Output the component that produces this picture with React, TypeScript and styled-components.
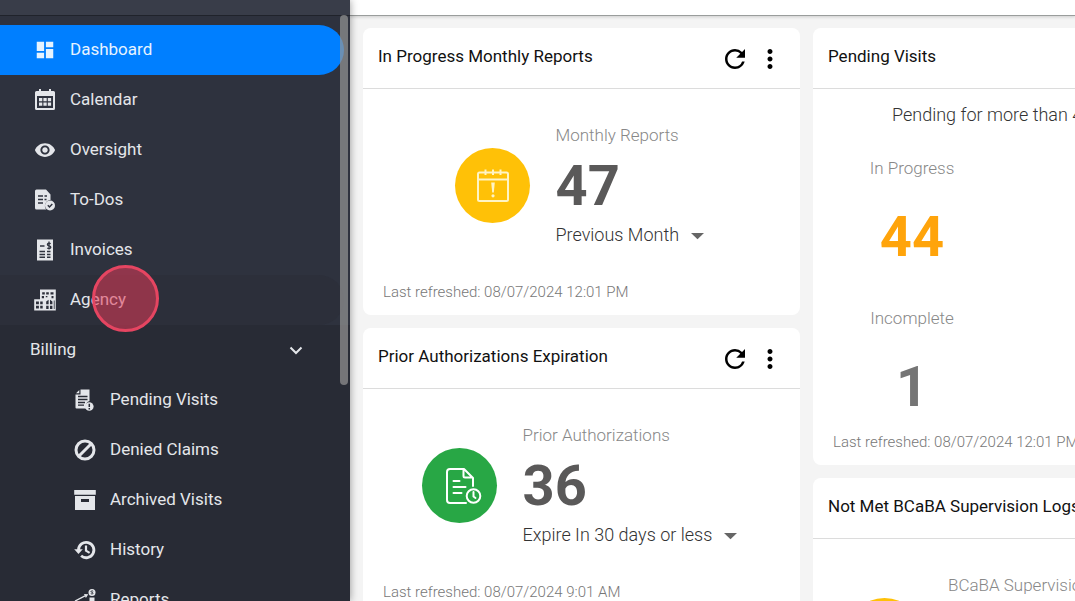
import React from 'react';
import styled, { createGlobalStyle } from 'styled-components';
import { MdDashboard, MdMoreVert, MdRefresh, MdRemoveRedEye } from 'react-icons/md';

const GlobalStyle = createGlobalStyle`
  *, *::before, *::after { box-sizing: border-box; }
  body { margin: 0; overflow: hidden; background: #f4f4f4; font-family: Roboto, sans-serif; }
  h2, p { margin: 0; }
`;

const Shell = styled.div`
  display: flex;
  height: 100vh;
  overflow: hidden;
`;

const Sidebar = styled.aside`
  position: relative;
  z-index: 2;
  flex: 0 0 350px;
  display: flex;
  flex-direction: column;
  overflow: hidden;
  background: #2e323e;
  color: #e4e6ea;
`;

const SidebarFrame = styled.div`
  position: relative;
  z-index: 2;
  display: flex;
  box-shadow: 0 0 8px rgba(0, 0, 0, 0.4);
`;

const Brand = styled.div`
  flex: 0 0 16px;
  background: #393d49;
  border-bottom: 1px solid #20232b;
`;

const NavList = styled.ul`
  margin: 0;
  padding: 9px 6px 0 0;
  list-style: none;
`;

const SubNav = styled.div`
  flex: 1 0 auto;
  background: #282b35;
`;

const SubList = styled.ul`
  margin: 0;
  padding: 0;
  list-style: none;
`;

const NavLink = styled.a<{ $active?: boolean; $hover?: boolean; $nested?: boolean }>`
  display: flex;
  align-items: center;
  gap: 10px;
  height: 50px;
  padding-left: ${(p) => (p.$nested ? 70 : 30)}px;
  border-radius: 0 25px 25px 0;
  background: ${(p) => (p.$active ? '#007fff' : p.$hover ? '#2c2f3a' : 'transparent')};
  color: ${(p) => (p.$active ? '#e6f3ff' : 'inherit')};
  text-decoration: none;
`;

const IconSlot = styled.span`
  display: flex;
  flex: 0 0 30px;
  justify-content: center;
`;

const NavText = styled.span`
  padding-bottom: 2px;
  font-size: 17px;
  line-height: 22px;
`;

const GroupToggle = styled.button`
  display: flex;
  align-items: center;
  justify-content: space-between;
  width: 100%;
  height: 50px;
  padding: 0 46px 0 30px;
  border: 0;
  background: none;
  color: inherit;
  font-family: inherit;
`;

const ScrollThumb = styled.div`
  position: absolute;
  top: 15px;
  right: 2px;
  width: 8px;
  height: 370px;
  border-radius: 4px;
  background: rgba(150, 150, 150, 0.7);
`;

const ClickMarker = styled.div`
  position: absolute;
  top: 265px;
  left: 92px;
  width: 67px;
  height: 67px;
  border: 3px solid #e54561;
  border-radius: 50%;
  background: rgba(226, 58, 88, 0.55);
`;

const Content = styled.div`
  flex: 1 1 0;
  min-width: 0;
  display: flex;
  flex-direction: column;
  overflow: hidden;
`;

const TopBar = styled.header`
  flex: 0 0 16px;
  background: #fff;
  border-bottom: 1px solid #9a9d9c;
  box-shadow: 0 1px 3px rgba(0, 0, 0, 0.16);
`;

const Board = styled.main`
  display: grid;
  grid-template-columns: repeat(2, minmax(437px, 1fr));
  align-items: start;
  gap: 13px;
  padding: 12px 13px;
`;

const Column = styled.div`
  display: flex;
  flex-direction: column;
  gap: 13px;
`;

const Card = styled.section`
  border-radius: 8px;
  background: #fff;
`;

const CardHeader = styled.div`
  display: flex;
  align-items: center;
  gap: 5px;
  height: 61px;
  padding: 2px 15px 0;
  border-bottom: 1px solid #dcdcdc;
`;

const CardTitle = styled.h2`
  flex: 1;
  padding-bottom: 6px;
  color: #111;
  font-size: 17px;
  font-weight: 400;
  line-height: 24px;
  white-space: nowrap;
`;

const IconButton = styled.button`
  display: flex;
  width: 30px;
  height: 30px;
  padding: 0;
  border: 0;
  background: none;
  color: #000;
`;

const Metric = styled.div`
  display: flex;
  align-items: center;
  justify-content: center;
  gap: 26px;
  padding: 35px 0 33px;
`;

const Badge = styled.div<{ $color: string }>`
  display: flex;
  flex: 0 0 75px;
  align-items: center;
  justify-content: center;
  height: 75px;
  border-radius: 50%;
  background: ${(p) => p.$color};
`;

const Label = styled.p`
  padding-bottom: 2px;
  color: #888;
  font-size: 17px;
  font-weight: 300;
  line-height: 22px;
  white-space: nowrap;
`;

const Figure = styled.p<{ $color?: string }>`
  color: ${(p) => p.$color || '#5a5959'};
  font-size: 56px;
  font-weight: 700;
  line-height: 76px;
`;

const Picker = styled.label`
  display: flex;
  align-items: center;
  gap: 11px;
  padding-right: 5px;
`;

const Select = styled.select`
  appearance: none;
  height: 23px;
  padding: 0 0 2px;
  border: 0;
  background: none;
  color: #333;
  font: 300 18px/21px Roboto, sans-serif;
`;

const Refreshed = styled.p`
  padding: 0 20px 11px;
  color: #777;
  font-size: 15px;
  font-weight: 300;
  line-height: 24px;
  white-space: nowrap;
`;

const PendingBody = styled.div`
  display: flex;
  flex-direction: column;
  align-items: center;
  padding: 15px 0 5px;
`;

const Tallies = styled.div`
  align-self: stretch;
  display: grid;
  grid-template-columns: 198px;
  gap: 32px;
  padding-top: 30px;
`;

const Tally = styled.div`
  display: flex;
  flex-direction: column;
  align-items: center;
  gap: 18px;
`;

const Svg = ({ size = 24, children }: { size?: number; children: React.ReactNode }) => (
  <svg width={size} height={size} viewBox={`0 0 ${size} ${size}`} fill="none" aria-hidden="true">
    {children}
  </svg>
);

const CalendarIcon = () => (
  <Svg>
    <path fill="currentColor" fillRule="evenodd" d="M6 1h2v2h8V1h2v2h2.500a1.500 1.500 0 0 1 1.500 1.500v16a1.500 1.500 0 0 1-1.500 1.500h-17A1.500 1.500 0 0 1 2 20.500v-16A1.500 1.500 0 0 1 3.500 3H6zM4 8v12h16V8z" />
    <path fill="currentColor" d="M6 10h3.300v3.300H6zM10.400 10h3.300v3.300h-3.300zM14.800 10h3.300v3.300h-3.300zM6 14.500h3.300v3.300H6zM10.400 14.500h3.300v3.300h-3.300zM14.800 14.500h3.300v3.300h-3.300z" />
  </Svg>
);

const TodoIcon = () => (
  <Svg>
    <path fill="currentColor" d="M3.500 1.500H13l4.500 5v5.500a5.800 5.800 0 0 0-4.200 9.500H3.500A1.500 1.500 0 0 1 2 20V3a1.500 1.500 0 0 1 1.500-1.500z" />
    <path stroke="#2e323e" strokeWidth="1.300" d="M5 8h5M11.500 8h2.500M5 11.500h5M11.500 11.500h2M5 15h5" />
    <circle cx="17" cy="17.500" r="5" fill="currentColor" />
    <path stroke="#2e323e" strokeWidth="1.500" d="m14.800 17.300 1.700 1.700 2.800-2.900" />
  </Svg>
);

const InvoiceIcon = () => (
  <Svg>
    <path fill="currentColor" d="M4 1.500h16v21H4z" />
    <path stroke="#2e323e" strokeWidth="1.400" d="M7 8h4.500M6.500 13.500H12M14 13.500h3.500M6.500 16.500H12M14 16.500h3.500M6.500 19.300H12M14 19.300h3.500" />
    <path stroke="#2e323e" strokeWidth="1.300" d="M17.600 5.700c-1-1-3.200-.7-3.200.8 0 1.800 3.400 1 3.400 2.800 0 1.600-2.500 1.700-3.500.6M16 3.500v8" />
  </Svg>
);

const AgencyIcon = () => (
  <Svg>
    <path fill="currentColor" d="M7 1.500h15.800v21H1.200V11.200H7z" />
    <path
      fill="#2c2f3a"
      d="M9.200 4.200h2.600v2.300H9.200zM13.200 4.200h2.600v2.300h-2.600zM17.500 4.200h3v2.300h-3zM8.800 8h2.200v2.200H8.800zM12.800 8h1.600v1.300h-1.600zM18.500 8h2v2.200h-2zM3 13.400h2.900v2.800H3zM7.200 13.400h2.500v2.800H7.200zM3 17.800h2.900v2.700H3zM7.200 17.800h2.500v2.700H7.200zM13.200 13.400l2.400-1.600v4.400h-2.400zM17 11.800l2.400 1.600v2.800H17zM13.200 17.800h2.400v3.200h-2.400zM17 17.800h2.400V21H17zM20.800 12.500h.8V21h-.8z"
    />
  </Svg>
);

const PendingIcon = () => (
  <Svg>
    <path fill="currentColor" d="M7.500 1.500h9V13a5 5 0 0 0-3 7.500H3.500a1 1 0 0 1-1-1V6.500h5zM3 5.200 6.300 2v3.200z" />
    <path stroke="#282b35" strokeWidth="1.300" d="M5 8.500h9.500M5 11.500h9.500M5 14.500h7M5 17.200h6" />
    <circle cx="16.300" cy="18.500" r="4.300" fill="currentColor" />
    <path stroke="#282b35" strokeWidth="1.500" d="M16.300 15.700v3.300M16.300 20v1.400" />
  </Svg>
);

const DeniedIcon = () => (
  <Svg>
    <circle cx="12" cy="12" r="9" stroke="currentColor" strokeWidth="3" />
    <path stroke="currentColor" strokeWidth="3" d="m6 18 12-12" />
  </Svg>
);

const ArchiveIcon = () => (
  <Svg>
    <path fill="currentColor" fillRule="evenodd" d="M1.200 2h21.600v4.800H1.200zM2 8h20v14H2zm6 3v3h8v-3z" />
  </Svg>
);

const HistoryIcon = () => (
  <Svg>
    <path stroke="currentColor" strokeWidth="2.800" d="M5.500 12a7.700 7.700 0 1 1 2.600 5.800" />
    <path fill="currentColor" d="M1.200 11.200h8.600L5.500 16z" />
    <path stroke="currentColor" strokeWidth="2.200" d="M13 7.500v5.200l3.600 2.200" />
  </Svg>
);

const ReportsIcon = () => (
  <Svg>
    <circle cx="19" cy="4.500" r="3.500" fill="currentColor" />
    <path stroke="#282b35" strokeWidth="1" d="M20.200 3.300c-1-.8-2.400-.3-2.200.4.200.8 2 .6 2.100 1.500 0 .8-1.400 1-2.300.3" />
    <path stroke="currentColor" strokeWidth="1.400" d="m2 13 10-5.200" />
    <path fill="currentColor" d="m11 6 4.300.3-2.400 3.600zM16.500 9.500h5V22h-5zM10 14h5v8h-5zM3.500 17h5v5h-5z" />
  </Svg>
);

const ChevronIcon = () => (
  <svg width="16" height="12" viewBox="0 0 16 12" fill="none" aria-hidden="true">
    <path stroke="currentColor" strokeWidth="2" d="m2.500 3.500 5.500 5.500 5.500-5.500" />
  </svg>
);

const CaretIcon = () => (
  <svg width="13" height="8" viewBox="0 0 13 8" aria-hidden="true">
    <path fill="#666" d="M0 1h13L6.500 7.200z" />
  </svg>
);

const CalendarAlertIcon = () => (
  <Svg size={36}>
    <g stroke="#fff4c4" strokeWidth="2">
      <rect x="4" y="4.500" width="30" height="28.500" rx="1.500" />
      <path d="M4 11.500h30M11.500 1.500v5.500M19 1.500v5.500M26.500 1.500v5.500" />
    </g>
    <path fill="#fff4c4" d="M17.200 14.500h3.600l-1 10h-1.600z" />
    <circle cx="19" cy="27.800" r="1.600" fill="#fff4c4" />
  </Svg>
);

const DocumentClockIcon = () => (
  <Svg size={46}>
    <g transform="translate(5 4)" stroke="#fff" strokeWidth="2" strokeLinecap="round" strokeLinejoin="round">
      <path d="M25 36H9a3 3 0 0 1-3-3V5a3 3 0 0 1 3-3h14l9 9v8M22.500 2.500V9a1.500 1.500 0 0 0 1.500 1.500h7" />
      <path d="M12.500 14h6M12.500 20h12M12.500 26h8" />
      <circle cx="32.500" cy="29" r="6.800" />
      <path d="M32.500 25v4.500l2 1.500" />
    </g>
  </Svg>
);

const mainItems = [
  { label: 'Dashboard', icon: <MdDashboard size={22} />, active: true },
  { label: 'Calendar', icon: <CalendarIcon /> },
  { label: 'Oversight', icon: <MdRemoveRedEye size={22} /> },
  { label: 'To-Dos', icon: <TodoIcon /> },
  { label: 'Invoices', icon: <InvoiceIcon /> },
  { label: 'Agency', icon: <AgencyIcon />, hover: true },
];

const billingItems = [
  { label: 'Pending Visits', icon: <PendingIcon /> },
  { label: 'Denied Claims', icon: <DeniedIcon /> },
  { label: 'Archived Visits', icon: <ArchiveIcon /> },
  { label: 'History', icon: <HistoryIcon /> },
  { label: 'Reports', icon: <ReportsIcon /> },
];

const Header = ({ title }: { title: string }) => (
  <CardHeader>
    <CardTitle>{title}</CardTitle>
    <IconButton aria-label={`Refresh ${title}`}><MdRefresh size={30} /></IconButton>
    <IconButton aria-label={`${title} options`}><MdMoreVert size={30} /></IconButton>
  </CardHeader>
);

const Dropdown = ({ name, value }: { name: string; value: string }) => (
  <Picker>
    <Select aria-label={name} defaultValue={value}>
      <option>{value}</option>
    </Select>
    <CaretIcon />
  </Picker>
);

type MetricCardProps = {
  title: string;
  label: string;
  color: string;
  icon: React.ReactNode;
  value: string;
  period: string;
  refreshed: string;
};

const MetricCard = ({ title, label, color, icon, value, period, refreshed }: MetricCardProps) => (
  <Card>
    <Header title={title} />
    <Metric>
      <Badge $color={color}>{icon}</Badge>
      <div>
        <Label>{label}</Label>
        <Figure>{value}</Figure>
        <Dropdown name={`${title} period`} value={period} />
      </div>
    </Metric>
    <Refreshed>Last refreshed: {refreshed}</Refreshed>
  </Card>
);

export default function App() {
  return (
    <>
      <GlobalStyle />
      <Shell>
        <SidebarFrame>
          <Sidebar>
            <Brand />
            <nav>
              <NavList>
                {mainItems.map((item) => (
                  <li key={item.label}>
                    <NavLink href="#" $active={item.active} $hover={item.hover}>
                      <IconSlot>{item.icon}</IconSlot>
                      <NavText>{item.label}</NavText>
                    </NavLink>
                  </li>
                ))}
              </NavList>
              <SubNav>
                <GroupToggle aria-expanded="true">
                  <NavText>Billing</NavText>
                  <ChevronIcon />
                </GroupToggle>
                <SubList>
                  {billingItems.map((item) => (
                    <li key={item.label}>
                      <NavLink href="#" $nested>
                        <IconSlot>{item.icon}</IconSlot>
                        <NavText>{item.label}</NavText>
                      </NavLink>
                    </li>
                  ))}
                </SubList>
              </SubNav>
            </nav>
            <ScrollThumb />
            <ClickMarker />
          </Sidebar>
        </SidebarFrame>
        <Content>
          <TopBar />
          <Board>
            <Column>
              <MetricCard
                title="In Progress Monthly Reports"
                label="Monthly Reports"
                color="#ffc107"
                icon={<CalendarAlertIcon />}
                value="47"
                period="Previous Month"
                refreshed="08/07/2024 12:01 PM"
              />
              <MetricCard
                title="Prior Authorizations Expiration"
                label="Prior Authorizations"
                color="#28a745"
                icon={<DocumentClockIcon />}
                value="36"
                period="Expire In 30 days or less"
                refreshed="08/07/2024 9:01 AM"
              />
            </Column>
            <Column>
              <Card>
                <Header title="Pending Visits" />
                <PendingBody>
                  <Dropdown name="Pending duration" value="Pending for more than 48 hours" />
                  <Tallies>
                    <Tally>
                      <Label>In Progress</Label>
                      <Figure $color="#ffa40b">44</Figure>
                    </Tally>
                    <Tally>
                      <Label>Incomplete</Label>
                      <Figure $color="#757575">1</Figure>
                    </Tally>
                  </Tallies>
                </PendingBody>
                <Refreshed>Last refreshed: 08/07/2024 12:01 PM</Refreshed>
              </Card>
              <MetricCard
                title="Not Met BCaBA Supervision Logs"
                label="BCaBA Supervision Logs"
                color="#ffc107"
                icon={<CalendarAlertIcon />}
                value="0"
                period="Logs from the Previous Month"
                refreshed="08/07/2024 12:01 PM"
              />
            </Column>
          </Board>
        </Content>
      </Shell>
    </>
  );
}
